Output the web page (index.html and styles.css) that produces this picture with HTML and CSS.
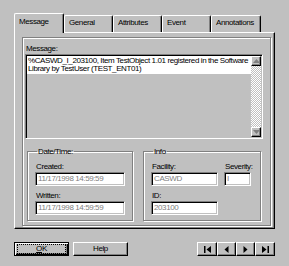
FILE: index.html
```html
<!DOCTYPE html>
<html>
<head>
<meta charset="utf-8">
<link rel="stylesheet" href="styles.css">
</head>
<body>
<div class="dialog">
  <div class="tabs">
    <div class="tab active">Message</div>
    <div class="tab">General</div>
    <div class="tab">Attributes</div>
    <div class="tab">Event</div>
    <div class="tab last">Annotations</div>
  </div>
  <div class="panel">
    <div class="frame">
      <div class="label msg-label">Message:</div>
      <div class="memo">
        <div class="memo-text">
          <div class="memo-lines">%CASWD_I_203100, Item TestObject 1.01 registered in the Software<br>Library by TestUser (TEST_ENT01)</div>
        </div>
        <div class="scrollbar">
          <div class="sb-btn"><svg width="7" height="4" viewBox="0 0 7 4"><path d="M3.5 0 L7 4 L0 4 Z" fill="#808080"/></svg></div>
          <div class="sb-track"></div>
          <div class="sb-btn"><svg width="7" height="4" viewBox="0 0 7 4"><path d="M0 0 L7 0 L3.5 4 Z" fill="#808080"/></svg></div>
        </div>
      </div>
      <div class="groups">
        <fieldset class="group date">
          <legend>Date/Time:</legend>
          <div class="field">
            <div class="label">Created:</div>
            <div class="input w90">11/17/1998 14:59:59</div>
          </div>
          <div class="field">
            <div class="label">Written:</div>
            <div class="input w90">11/17/1998 14:59:59</div>
          </div>
        </fieldset>
        <fieldset class="group info">
          <legend>Info</legend>
          <div class="row">
            <div class="field">
              <div class="label">Facility:</div>
              <div class="input w67">CASWD</div>
            </div>
            <div class="field">
              <div class="label">Severity:</div>
              <div class="input w27">I</div>
            </div>
          </div>
          <div class="field">
            <div class="label">ID:</div>
            <div class="input w67">203100</div>
          </div>
        </fieldset>
      </div>
    </div>
  </div>
  <div class="buttons">
    <div class="btn default"><span class="focus"><u>O</u>K</span></div>
    <div class="btn">Help</div>
    <div class="nav">
      <div class="btn nb w20"><svg width="7" height="7" viewBox="0 0 7 7"><rect x="0" y="0" width="1.5" height="7" fill="#000"/><path d="M7 0 L7 7 L2.5 3.5 Z" fill="#000"/></svg></div>
      <div class="btn nb w19"><svg width="5" height="7" viewBox="0 0 5 7"><path d="M4.5 0 L4.5 7 L0.5 3.5 Z" fill="#000"/></svg></div>
      <div class="btn nb w19"><svg width="5" height="7" viewBox="0 0 5 7"><path d="M0.5 0 L0.5 7 L4.5 3.5 Z" fill="#000"/></svg></div>
      <div class="btn nb w20"><svg width="7" height="7" viewBox="0 0 7 7"><path d="M0 0 L0 7 L4.5 3.5 Z" fill="#000"/><rect x="5.5" y="0" width="1.5" height="7" fill="#000"/></svg></div>
    </div>
  </div>
</div>
</body>
</html>
```

FILE: styles.css
```css
* { box-sizing: border-box; }
html, body { margin: 0; padding: 0; }
body {
  width: 289px;
  height: 266px;
  overflow: hidden;
  background: #c0c0c0;
  font-family: "Liberation Sans", Arial, sans-serif;
  font-size: 8px;
  letter-spacing: -0.4px;
  color: #000;
}
.dialog {
  padding: 13px 14px 0 14px;
}
.tabs {
  display: flex;
  align-items: flex-end;
  height: 19px;
  position: relative;
  z-index: 1;
}
.tab {
  width: 49px;
  height: 17px;
  border-top: 1px solid #fff;
  border-left: 1px solid #fff;
  border-right: 1px solid #000;
  border-radius: 2px 2px 0 0;
  box-shadow: inset -1px 0 #808080;
  padding: 2px 0 0 4px;
  line-height: 10px;
  white-space: nowrap;
}
.tab.active {
  width: 50px;
  height: 20px;
  margin-bottom: -1px;
  background: #c0c0c0;
  padding: 3px 0 0 4px;
}
.tab.last { width: 50px; }
.panel {
  height: 197px;
  border: 1px solid;
  border-color: #fff #000 #000 #fff;
  box-shadow: inset -1px -1px #808080;
  padding: 4px 3px 2px 7px;
}
.frame {
  height: 100%;
  border: 1px solid #808080;
  box-shadow: inset 1px 1px #fff, 1px 1px #fff;
  padding: 6px 2px 0 2px;
}
.label {
  line-height: 9px;
  height: 9px;
  padding-left: 1px;
  white-space: nowrap;
}
.msg-label { margin-bottom: 1px; }
.memo {
  width: 238px;
  height: 85px;
  display: flex;
  border: 1px solid;
  border-color: #808080 #fff #fff #808080;
  box-shadow: inset 1px 1px #000, inset -1px -1px #c0c0c0;
  padding: 1px;
}
.memo-text {
  flex: 1;
  background: #c0c0c0;
}
.memo-lines {
  background: #fff;
  line-height: 8px;
  padding: 1px 0 1px 1px;
  white-space: nowrap;
  overflow: hidden;
}
.scrollbar {
  width: 10px;
  display: flex;
  flex-direction: column;
  background: #c0c0c0;
}
.sb-btn {
  height: 10px;
  border: 1px solid;
  border-color: #fff #000 #000 #fff;
  box-shadow: inset -1px -1px #808080;
  background: #c0c0c0;
  display: flex;
  align-items: center;
  justify-content: center;
}
.sb-track {
  flex: 1;
  background: repeating-conic-gradient(#fff 0 25%, #c0c0c0 0 50%) 0 0 / 2px 2px;
}
.groups {
  display: flex;
  gap: 10px;
  margin: 8px 0 0 2px;
}
fieldset.group {
  margin: 0;
  padding: 0 0 0 7px;
  height: 74px;
  border: 1px solid #808080;
  box-shadow: inset 1px 1px #fff, 1px 1px #fff;
}
fieldset.group legend {
  padding: 0 1px;
  margin-left: 2px;
  line-height: 9px;
  height: 9px;
}
.group.date { width: 106px; }
.group.info { width: 118px; }
.field { margin-top: 6px; }
.field + .field { margin-top: 5px; }
.row { display: flex; gap: 6px; }
.row .field + .field { margin-top: 6px; }
.row + .field { margin-top: 5px; }
.input {
  height: 14px;
  margin-top: 1px;
  border: 1px solid;
  border-color: #808080 #fff #fff #808080;
  box-shadow: inset 1px 1px #000, inset -1px -1px #c0c0c0;
  background: #fff;
  color: #808080;
  line-height: 12px;
  padding: 0 0 0 2px;
  white-space: nowrap;
}
.w90 { width: 90px; }
.w67 { width: 67px; }
.w27 { width: 27px; }
.buttons {
  display: flex;
  gap: 4px;
  margin-top: 13px;
}
.btn {
  width: 55px;
  height: 14px;
  border: 1px solid;
  border-color: #fff #000 #000 #fff;
  box-shadow: inset -1px -1px #808080;
  display: flex;
  align-items: center;
  justify-content: center;
  line-height: 10px;
}
.btn.default {
  border: 1px solid #000;
  box-shadow: inset 1px 1px #fff, inset -1px -1px #000, inset -2px -2px #808080;
}
.focus {
  display: flex;
  align-items: center;
  justify-content: center;
  width: 47px;
  height: 8px;
  outline: 1px dotted #000;
}
.nav {
  display: flex;
  margin-left: auto;
}
.nb.w20 { width: 20px; }
.nb.w19 { width: 19px; }
```
